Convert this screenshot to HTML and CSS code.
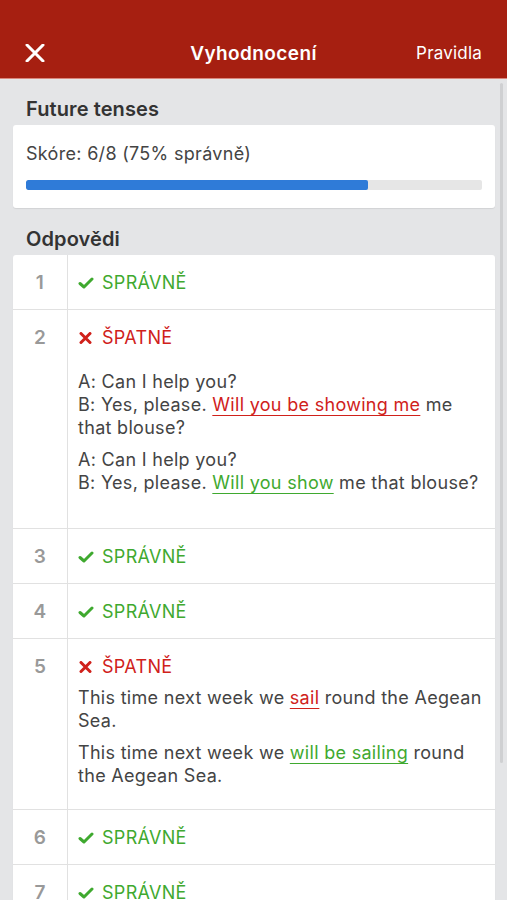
FILE: index.html
```html
<!DOCTYPE html>
<html lang="cs">
<head>
<meta charset="utf-8">
<title>Vyhodnocení</title>
<link rel="stylesheet" href="styles.css">
</head>
<body>
<header class="navbar">
  <button class="nav-close" aria-label="Zavřít">
    <svg width="20" height="18" viewBox="0 0 20 18"><path d="M2 1 L18 17 M18 1 L2 17" stroke="#fff" stroke-width="3" stroke-linecap="round"/></svg>
  </button>
  <h1 class="nav-title">Vyhodnocení</h1>
  <span class="nav-action">Pravidla</span>
</header>
<main class="content">
  <h2 class="section-title">Future tenses</h2>
  <section class="card score-card">
    <p class="score-text">Skóre: 6/8 (75% správně)</p>
    <div class="progress"><div class="progress-fill" style="width:75%"></div></div>
  </section>

  <h2 class="section-title answers-title">Odpovědi</h2>
  <section class="card answers">
    <div class="row">
      <div class="num">1</div>
      <div class="cell"><div class="status ok"><svg class="ico" width="16" height="12" viewBox="0 0 16 12"><path d="M2 6.5 L6 10 L14 2" fill="none" stroke="currentColor" stroke-width="3" stroke-linecap="round" stroke-linejoin="round"/></svg>SPRÁVNĚ</div></div>
    </div>
    <div class="row">
      <div class="num">2</div>
      <div class="cell">
        <div class="status bad"><svg class="ico" width="16" height="12" viewBox="0 0 16 12"><path d="M3 1.5 L12 10.5 M12 1.5 L3 10.5" stroke="currentColor" stroke-width="3" stroke-linecap="round"/></svg>ŠPATNĚ</div>
        <div class="dialog">
          <p class="answer">A: Can I help you?<br>B: Yes, please. <span class="wrong">Will you be showing me</span> me that blouse?</p>
          <p class="answer">A: Can I help you?<br>B: Yes, please. <span class="right">Will you show</span> me that blouse?</p>
        </div>
      </div>
    </div>
    <div class="row">
      <div class="num">3</div>
      <div class="cell"><div class="status ok"><svg class="ico" width="16" height="12" viewBox="0 0 16 12"><path d="M2 6.5 L6 10 L14 2" fill="none" stroke="currentColor" stroke-width="3" stroke-linecap="round" stroke-linejoin="round"/></svg>SPRÁVNĚ</div></div>
    </div>
    <div class="row">
      <div class="num">4</div>
      <div class="cell"><div class="status ok"><svg class="ico" width="16" height="12" viewBox="0 0 16 12"><path d="M2 6.5 L6 10 L14 2" fill="none" stroke="currentColor" stroke-width="3" stroke-linecap="round" stroke-linejoin="round"/></svg>SPRÁVNĚ</div></div>
    </div>
    <div class="row">
      <div class="num">5</div>
      <div class="cell">
        <div class="status bad"><svg class="ico" width="16" height="12" viewBox="0 0 16 12"><path d="M3 1.5 L12 10.5 M12 1.5 L3 10.5" stroke="currentColor" stroke-width="3" stroke-linecap="round"/></svg>ŠPATNĚ</div>
        <div class="sentences">
          <p class="answer">This time next week we <span class="wrong">sail</span> round the Aegean Sea.</p>
          <p class="answer">This time next week we <span class="right">will be sailing</span> round the Aegean Sea.</p>
        </div>
      </div>
    </div>
    <div class="row">
      <div class="num">6</div>
      <div class="cell"><div class="status ok"><svg class="ico" width="16" height="12" viewBox="0 0 16 12"><path d="M2 6.5 L6 10 L14 2" fill="none" stroke="currentColor" stroke-width="3" stroke-linecap="round" stroke-linejoin="round"/></svg>SPRÁVNĚ</div></div>
    </div>
    <div class="row">
      <div class="num">7</div>
      <div class="cell"><div class="status ok"><svg class="ico" width="16" height="12" viewBox="0 0 16 12"><path d="M2 6.5 L6 10 L14 2" fill="none" stroke="currentColor" stroke-width="3" stroke-linecap="round" stroke-linejoin="round"/></svg>SPRÁVNĚ</div></div>
    </div>
    <div class="row">
      <div class="num">8</div>
      <div class="cell"><div class="status ok"><svg class="ico" width="16" height="12" viewBox="0 0 16 12"><path d="M2 6.5 L6 10 L14 2" fill="none" stroke="currentColor" stroke-width="3" stroke-linecap="round" stroke-linejoin="round"/></svg>SPRÁVNĚ</div></div>
    </div>
  </section>
</main>
<div class="scrollbar"></div>
</body>
</html>
```
FILE: styles.css
```css
* { box-sizing: border-box; }
html, body { margin: 0; padding: 0; }
body {
  background: #e4e5e7;
  font-family: Inter, "Liberation Sans", Arial, sans-serif;
  color: #444;
  font-size: 18px;
  letter-spacing: 0.3px;
  overflow: hidden;
  height: 900px;
}
.navbar {
  height: 79px;
  background: #a61f11;
  border-bottom: 1px solid #d9877d;
  padding: 28px 25px 0 25px;
  display: flex;
  align-items: center;
  justify-content: space-between;
  position: relative;
}
.nav-close {
  background: none;
  border: 0;
  padding: 0;
  width: 20px;
  height: 18px;
  display: flex;
}
.nav-title {
  position: absolute;
  left: 0;
  right: 0;
  top: 28px;
  bottom: 0;
  margin: 0;
  display: flex;
  align-items: center;
  justify-content: center;
  font-size: 19px;
  font-weight: 600;
  letter-spacing: 0.4px;
  color: #fff;
  pointer-events: none;
}
.nav-action {
  color: #fff;
  font-size: 17px;
  letter-spacing: 0.2px;
}
.content {
  padding: 0 12px 0 13px;
}
.section-title {
  margin: 0;
  font-size: 20px;
  font-weight: 600;
  letter-spacing: 0.1px;
  color: #333;
  padding: 19px 0 0 13px;
  line-height: 23px;
  height: 46px;
}
.answers-title {
  padding-top: 20px;
  height: 47px;
}
.card {
  background: #fff;
  border-radius: 3px;
  box-shadow: 0 1px 1px rgba(0,0,0,0.08);
}
.score-card {
  padding: 17px 13px 18px 13px;
}
.score-text {
  margin: 0;
  line-height: 23px;
  font-size: 18px;
  color: #444;
}
.progress {
  margin-top: 15px;
  height: 10px;
  background: #e6e6e6;
  border-radius: 2px;
  overflow: hidden;
}
.progress-fill {
  height: 100%;
  background: #2f7bd8;
  border-radius: 2px;
}
.row {
  display: flex;
  border-bottom: 1px solid #e1e1e1;
}
.num {
  width: 55px;
  flex: none;
  border-right: 1px solid #e1e1e1;
  text-align: center;
  padding-top: 16px;
  line-height: 23px;
  font-weight: 600;
  color: #999;
  font-size: 19px;
}
.cell {
  flex: 1;
  padding: 16px 10px 15px 10px;
}
.status {
  display: flex;
  align-items: center;
  line-height: 23px;
  font-size: 18px;
}
.status .ico { margin-right: 8px; flex: none; }
.status.ok { color: #3fa92f; }
.status.bad { color: #d0211b; }
.answer {
  margin: 0;
  line-height: 23px;
  color: #444;
  font-size: 18px;
}
.dialog { padding: 21px 0 19px 0; }
.dialog .answer + .answer { margin-top: 9px; }
.sentences { padding: 8px 0 7px 0; }
.sentences .answer + .answer { margin-top: 9px; }
.wrong, .right {
  text-decoration: underline;
  text-decoration-thickness: 1px;
  text-underline-offset: 4px;
}
.wrong { color: #d0211b; }
.right { color: #3fa92f; }
.scrollbar {
  position: absolute;
  top: 83px;
  left: 500px;
  width: 3px;
  height: 680px;
  background: #cfd0d2;
  border-radius: 2px;
}
```
